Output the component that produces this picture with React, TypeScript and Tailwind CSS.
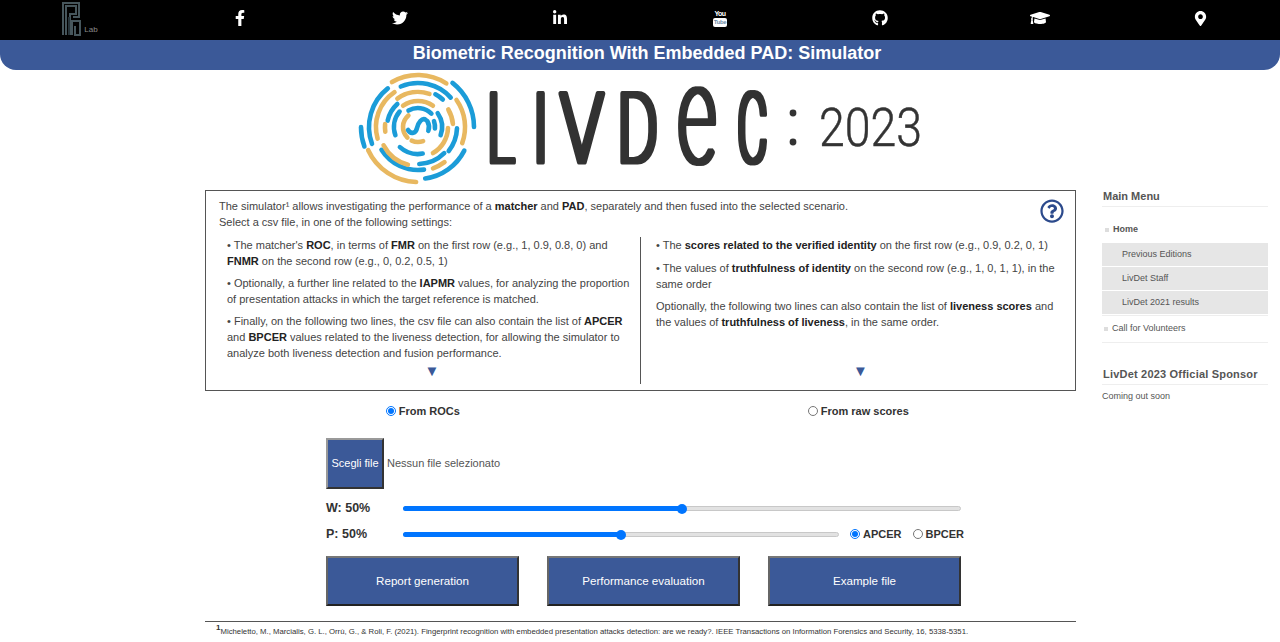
import { FaFacebookF, FaTwitter, FaLinkedinIn, FaGithub, FaGraduationCap, FaMapMarkerAlt, FaRegQuestionCircle } from "react-icons/fa";

const BLUE = "#1b9cd8";
const GOLD = "#e8b860";

// r, start angle, end angle (degrees clockwise from top), colour
const arcs: [number, number, number, string][] = [
  [52, -30, 33, GOLD],
  [56, 38, 90, BLUE],
  [52, 117, 172, BLUE],
  [55, 182, 245, GOLD],
  [57, 250, 270, BLUE],
  [49, 250, 322, BLUE],
  [44, -23, 48, BLUE],
  [47, 55, 110, GOLD],
  [44, 143, 160, GOLD],
  [43, 172, 238, BLUE],
  [39, 195, 242, GOLD],
  [42, 254, 326, GOLD],
  [35, -36, 19, GOLD],
  [37, 28, 42, BLUE],
  [39, 92, 128, BLUE],
  [37, 135, 178, BLUE],
  [35, 60, 85, GOLD],
  [30, 92, 150, GOLD],
  [27, 170, 222, BLUE],
  [33, 262, 275, GOLD],
  [31, 282, 318, BLUE],
  [26, -35, 35, GOLD],
  [24, 250, 310, BLUE],
  [19, -30, 45, BLUE],
  [24, 55, 110, BLUE],
  [17, 70, 95, BLUE],
  [11, 60, 110, BLUE],
  [15, 160, 205, GOLD],
  [15, 225, 320, GOLD],
];

function arcPath(r: number, a0: number, a1: number) {
  const p = (a: number) => {
    const t = (a * Math.PI) / 180;
    return `${(68 + r * Math.sin(t)).toFixed(1)} ${(57 - r * Math.cos(t)).toFixed(1)}`;
  };
  return `M${p(a0)}A${r} ${r} 0 ${a1 - a0 > 180 ? 1 : 0} 1 ${p(a1)}`;
}

function Letter({ x, sx, w = 5, y = 92, size = 97, ch }: { x: number; sx: number; w?: number; y?: number; size?: number; ch: string }) {
  return (
    <text
      transform={`translate(${x} ${y}) scale(${sx} 1)`}
      fontFamily="Roboto, sans-serif"
      fontWeight={100}
      fontSize={size}
      fill="#333"
      stroke="#333"
      strokeWidth={w}
      strokeLinejoin="round"
    >
      {ch}
    </text>
  );
}

function LivdetLogo() {
  return (
    <svg width="580" height="116" viewBox="0 0 580 116" className="block">
      <defs>
        {/* squeezed letters lose stem width, so widen them sideways only */}
        <filter id="widen" x="-5%" y="-5%" width="110%" height="110%">
          <feMorphology operator="dilate" radius="1.5 0" />
        </filter>
      </defs>
      <g fill="none" strokeWidth="4.6" strokeLinecap="round">
        {arcs.map(([r, a0, a1, c], i) => (
          <path key={i} d={arcPath(r, a0, a1)} stroke={c} />
        ))}
        <path d="M58 60c3 5 8 3 9-2s5-11 9-8" stroke={BLUE} />
      </g>
      <g filter="url(#widen)">
        <Letter x={138} sx={0.52} ch="L" />
        <Letter x={183} sx={0.6} ch="I" />
        <Letter x={211} sx={0.72} ch="V" />
        <Letter x={268} sx={0.62} ch="D" />
        <Letter x={328} sx={0.55} y={93} size={137} w={4} ch="e" />
        <Letter x={388} sx={0.46} ch="C" />
      </g>
      <circle cx="443" cy="43" r="3.4" fill="#333" />
      <circle cx="443" cy="72" r="3.4" fill="#333" />
      <text x="469" y="76" fontFamily="Roboto, sans-serif" fontWeight={300} fontSize="54" fill="#333" stroke="#333" strokeWidth="0.5" textLength="103" lengthAdjust="spacingAndGlyphs">
        2023
      </text>
    </svg>
  );
}

function PraLogo() {
  return (
    <div className="flex items-end gap-[2px] mt-[2px]">
      <svg width="20" height="34" viewBox="0 0 20 34" fill="none" stroke="#46565c" strokeWidth="2">
        <path d="M1 33V1h16v14h-6" />
        <path d="M4 33V4h10v8h-6v21" />
        <path d="M10 33V19h8v14h-5v-9" />
        <path d="M7 15v18" stroke="#27343a" />
      </svg>
      <span className="mb-[2px] text-[8px] leading-[9px] text-[#8a8a8a]">Lab</span>
    </div>
  );
}

function YoutubeIcon() {
  return (
    <div className="flex flex-col items-center w-[14px]">
      <span className="text-[7px] leading-[7px] font-bold text-white tracking-[-0.5px]">You</span>
      <span className="mt-[1px] w-[14px] h-[9px] rounded-[2px] bg-white text-[6px] leading-[9px] text-center font-bold text-[#6d8aa8] tracking-[-0.4px]">Tube</span>
    </div>
  );
}

function Slider({ pct, width }: { pct: number; width: string }) {
  return (
    <div className={`relative h-[5px] rounded-full bg-[#e2e2e2] border border-[#c8c8c8] ${width}`}>
      <div className="h-[5px] -mt-px -ml-px rounded-full bg-[#0075ff]" style={{ width: `${pct}%` }} />
      <div className="absolute top-[-3px] w-[10px] h-[10px] rounded-full bg-[#0075ff]" style={{ left: `calc(${pct}% - 5px)` }} />
    </div>
  );
}

function ActionButton({ label }: { label: string }) {
  return (
    <button className="w-[193px] h-[50px] bg-[#3b5998] text-white text-[11.6px] border-2 border-t-[#777] border-l-[#666] border-r-[#333] border-b-[#222]">
      {label}
    </button>
  );
}

export default function App() {
  return (
    <div className="font-['Liberation_Sans',Arial,sans-serif] text-[#333] bg-white h-[642px] overflow-hidden">
      {/* TOP BAR */}
      <div className="h-10 pb-1 bg-black grid grid-cols-8 items-center justify-items-center text-white text-[16px]">
        <PraLogo />
        <FaFacebookF />
        <FaTwitter />
        <FaLinkedinIn />
        <YoutubeIcon />
        <FaGithub />
        <FaGraduationCap className="text-[20px]" />
        <FaMapMarkerAlt className="text-[15px]" />
      </div>
      <div className="h-[30px] pl-[14px] bg-[#3b5998] rounded-b-[16px] text-white text-center font-bold text-[18px] leading-[27px]">
        Biometric Recognition With Embedded PAD: Simulator
      </div>

      {/* LOGO */}
      <div className="h-[120px] flex justify-center">
        <LivdetLogo />
      </div>

      <div className="flex pl-[205px]">
        {/* MAIN COLUMN */}
        <div className="w-[871px]">
          <div className="relative h-[201px] border border-[#555] text-[11px] leading-4 text-[#444]">
            <FaRegQuestionCircle className="absolute top-[8px] right-[11px] text-[24px] text-[#2c4a8c]" />
            <div className="pt-[7px] pl-[13px]">
              <p>
                The simulator¹ allows investigating the performance of a <b className="text-[#222]">matcher</b> and <b className="text-[#222]">PAD</b>, separately and then fused into the selected scenario.
              </p>
              <p>Select a csv file, in one of the following settings:</p>
            </div>
            <div className="mt-[7px] flex h-[147px]">
              <div className="w-[434px] pl-[21px] pr-[8px] flex flex-col gap-[6px]">
                <p>• The matcher's <b className="text-[#222]">ROC</b>, in terms of <b className="text-[#222]">FMR</b> on the first row (e.g., 1, 0.9, 0.8, 0) and <b className="text-[#222]">FNMR</b> on the second row (e.g., 0, 0.2, 0.5, 1)</p>
                <p>• Optionally, a further line related to the <b className="text-[#222]">IAPMR</b> values, for analyzing the proportion of presentation attacks in which the target reference is matched.</p>
                <p>• Finally, on the following two lines, the csv file can also contain the list of <b className="text-[#222]">APCER</b> and <b className="text-[#222]">BPCER</b> values related to the liveness detection, for allowing the simulator to analyze both liveness detection and fusion performance.</p>
                <div className="-mt-[2px] pl-[5px] text-center text-[15px] leading-[12px] text-[#3b5998]">▼</div>
              </div>
              <div className="flex-1 border-l border-[#555] pl-[15px] pr-[20px] flex flex-col gap-[6.5px]">
                <p>• The <b className="text-[#222]">scores related to the verified identity</b> on the first row (e.g., 0.9, 0.2, 0, 1)</p>
                <p>• The values of <b className="text-[#222]">truthfulness of identity</b> on the second row (e.g., 1, 0, 1, 1), in the same order</p>
                <p>Optionally, the following two lines can also contain the list of <b className="text-[#222]">liveness scores</b> and the values of <b className="text-[#222]">truthfulness of liveness</b>, in the same order.</p>
                <div className="mt-auto mb-[7px] pl-[10px] text-center text-[15px] leading-[12px] text-[#3b5998]">▼</div>
              </div>
            </div>
          </div>

          {/* SCENARIO */}
          <div className="mt-[12px] grid grid-cols-2 text-center text-[11px] leading-4 font-bold text-[#333]">
            <label className="flex items-center justify-center gap-[3px]">
              <input type="radio" name="scenario" defaultChecked className="w-[10px] h-[10px] m-0" />
              From ROCs
            </label>
            <label className="flex items-center justify-center gap-[3px]">
              <input type="radio" name="scenario" className="w-[10px] h-[10px] m-0" />
              From raw scores
            </label>
          </div>

          {/* FILE */}
          <div className="mt-[19px] pl-[121px] flex items-center text-[11px]">
            <button className="w-[58px] h-[51px] bg-[#3b5998] text-white text-[11px] border-2 border-t-[#999] border-l-[#999] border-r-[#333] border-b-[#333]">
              Scegli file
            </button>
            <span className="ml-[3px] text-[#555]">Nessun file selezionato</span>
          </div>

          {/* SLIDERS */}
          <div className="mt-[10px] pl-[121px] pr-[115px] flex items-center h-[18px] font-bold text-[12.5px] text-[#333]">
            <span className="w-[77px]">W: 50%</span>
            <Slider pct={50} width="w-[558px]" />
          </div>
          <div className="mt-[8px] pl-[121px] flex items-center h-[18px] font-bold text-[12.5px] text-[#333]">
            <span className="w-[77px]">P: 50%</span>
            <Slider pct={50} width="w-[436px]" />
            <label className="ml-[11px] flex items-center gap-[3px] text-[11px]">
              <input type="radio" name="metric" defaultChecked className="w-[10px] h-[10px] m-0" />
              APCER
            </label>
            <label className="ml-[11px] flex items-center gap-[3px] text-[11px]">
              <input type="radio" name="metric" className="w-[10px] h-[10px] m-0" />
              BPCER
            </label>
          </div>

          {/* ACTIONS */}
          <div className="mt-[13px] pl-[121px] flex gap-[28px]">
            <ActionButton label="Report generation" />
            <ActionButton label="Performance evaluation" />
            <ActionButton label="Example file" />
          </div>

          <div className="mt-[15px] border-t border-[#555] pt-[3px] pl-[11px] text-[7.75px] leading-[14px] text-[#333] whitespace-nowrap">
            <sup className="font-bold text-[8px] leading-none">1</sup>Micheletto, M., Marcialis, G. L., Orrù, G., &amp; Roli, F. (2021). Fingerprint recognition with embedded presentation attacks detection: are we ready?. IEEE Transactions on Information Forensics and Security, 16, 5338-5351.
          </div>
        </div>

        {/* SIDEBAR */}
        <div className="ml-[26px] w-[166px] text-[9px] text-[#555]">
          <div className="pl-[1px] font-bold text-[11px] leading-[12px] pb-[4px] border-b border-[#eee]">Main Menu</div>
          <div className="mt-[15px] h-[16px] flex items-center gap-[4px] pl-[3px] font-bold">
            <span className="w-[4px] h-[4px] bg-[#ddd]" />
            Home
          </div>
          <div className="mt-[5px] flex flex-col gap-px border-b border-[#eee] pb-[1px]">
            <div className="h-[23px] pl-[20px] flex items-center bg-[#e6e6e6]">Previous Editions</div>
            <div className="h-[23px] pl-[20px] flex items-center bg-[#e6e6e6]">LivDet Staff</div>
            <div className="h-[23px] pl-[20px] flex items-center bg-[#e6e6e6]">LivDet 2021 results</div>
          </div>
          <div className="h-[27px] flex items-center gap-[4px] pl-[2px] border-b border-[#eee]">
            <span className="w-[4px] h-[4px] bg-[#ddd]" />
            Call for Volunteers
          </div>
          <div className="mt-[25px] pl-[1px] font-bold text-[11px] leading-[12px] tracking-[0.2px] pb-[4px] border-b border-[#eee] whitespace-nowrap">LivDet 2023 Official Sponsor</div>
          <div className="mt-[5px] leading-[12px]">Coming out soon</div>
        </div>
      </div>
    </div>
  );
}
